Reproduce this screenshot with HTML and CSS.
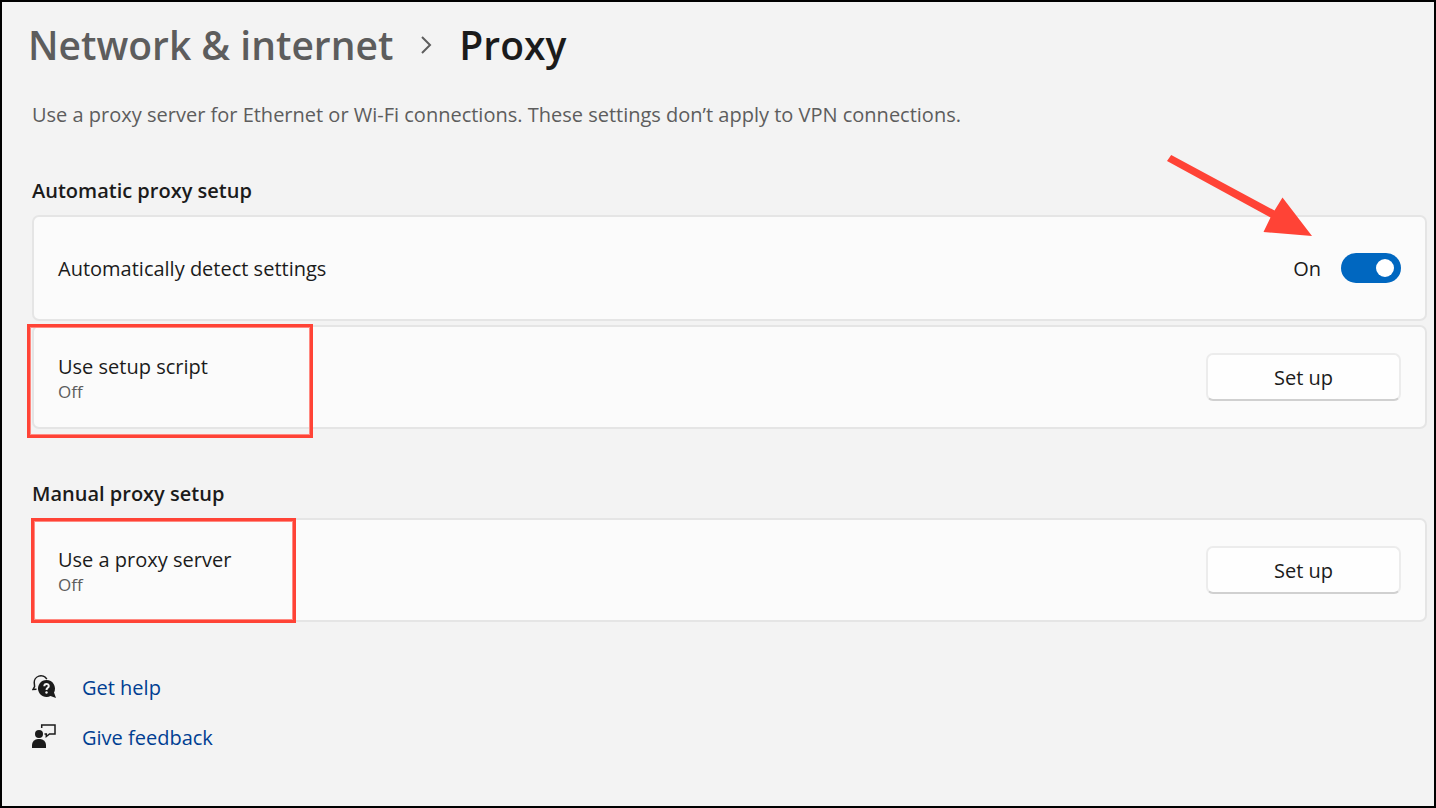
FILE: index.html
```html
<!DOCTYPE html>
<html lang="en">
<head>
    <meta charset="utf-8">
    <title>Settings - Proxy</title>
    <link rel="stylesheet" href="styles.css">
</head>
<body>
    <main class="page">
        <nav class="breadcrumb">
            <a href="#network">Network &amp; internet</a>
            <svg class="chevron" viewBox="0 0 12 18" width="12" height="18"><path d="M2 1l8 8-8 8"/></svg>
            <h1>Proxy</h1>
        </nav>
        <p class="intro">Use a proxy server for Ethernet or Wi-Fi connections. These settings don’t apply to VPN connections.</p>

        <section class="group">
            <h2>Automatic proxy setup</h2>
            <div class="card card-tall">
                <label for="auto-detect">Automatically detect settings</label>
                <div class="toggle">
                    <span>On</span>
                    <input type="checkbox" id="auto-detect" role="switch" checked>
                </div>
                <svg class="arrow" viewBox="0 0 144 84" width="144" height="84">
                    <path d="M4.200 0L107.500 55.500L115.500 42.500L145 81L96.500 77L103.500 62.500L0 6Z"/>
                </svg>
            </div>
            <div class="card">
                <div class="text">
                    <span id="script-name">Use setup script</span>
                    <small>Off</small>
                </div>
                <button type="button" aria-describedby="script-name">Set up</button>
                <div class="mark mark-script"></div>
            </div>
        </section>

        <section class="group">
            <h2>Manual proxy setup</h2>
            <div class="card">
                <div class="text">
                    <span id="server-name">Use a proxy server</span>
                    <small>Off</small>
                </div>
                <button type="button" aria-describedby="server-name">Set up</button>
                <div class="mark mark-server"></div>
            </div>
        </section>

        <footer class="links">
            <a href="#help">
                <svg viewBox="0 0 24 24" width="24" height="24">
                    <path class="line thin" d="M14.800 5.200A6.700 6.700 0 0 0 2.300 9.300L2.600 12.500L1 15.400L4.500 15.300"/>
                    <path d="M14.500 6a8.500 8.500 0 1 0 4 16l5.500 2-2-5.500A8.500 8.500 0 0 0 14.500 6Z"/>
                    <path class="question" d="M12.300 12.300c0-3.200 4.500-3 4.500-.3 0 2-2.300 1.700-2.300 4"/>
                    <circle class="dot" cx="14.500" cy="18.500" r="1.200"/>
                </svg>
                <span>Get help</span>
            </a>
            <a href="#feedback">
                <svg viewBox="0 0 24 24" width="24" height="24">
                    <path class="line thin" d="M9.700 4V1H23V10H17.500L14.300 12.500V10H12.500"/>
                    <circle cx="7" cy="10" r="4"/>
                    <path d="M0 24V21a6 6 0 0 1 6-6h2a6 6 0 0 1 6 6v3Z"/>
                </svg>
                <span>Give feedback</span>
            </a>
        </footer>
    </main>
</body>
</html>
```
FILE: styles.css
```css
* {
    box-sizing: border-box;
}
body {
    margin: 0;
    font-family: "Open Sans", "Noto Sans", sans-serif;
    font-size: 20px;
    line-height: 28px;
    color: #1b1b1b;
}
.page {
    min-height: 100vh;
    padding: 15px 7px 16px 30px;
    background: #f3f3f3;
    border: 2px solid #000;
}
.breadcrumb {
    display: flex;
    align-items: center;
    gap: 27px;
    margin-left: -4px;
    font-size: 39px;
    line-height: 56px;
    font-weight: 600;
}
.breadcrumb a {
    color: #5d5d5d;
    text-decoration: none;
}
.breadcrumb h1 {
    margin: 0;
    font-size: 39px;
    font-weight: 600;
}
.chevron {
    fill: none;
    stroke: #5d5d5d;
    stroke-width: 2;
}
.intro {
    margin: 28px 0 0;
    color: #5d5d5d;
}
.group {
    display: flex;
    flex-direction: column;
    gap: 4px;
    margin-top: 48px;
}
.group + .group {
    margin-top: 51px;
}
.group h2 {
    margin: 0 0 6px;
    font-size: 20px;
    line-height: 28px;
    font-weight: 600;
}
.card {
    position: relative;
    display: flex;
    align-items: center;
    justify-content: space-between;
    min-height: 104px;
    padding: 0 24px;
    background: #fbfbfb;
    border: 2px solid #e5e5e5;
    border-radius: 7px;
}
.card-tall {
    min-height: 106px;
}
.card label,
.text,
.toggle span {
    padding-top: 2px;
}
.text {
    display: flex;
    flex-direction: column;
}
.text small {
    font-size: 17px;
    line-height: 22px;
    color: #5d5d5d;
}
.toggle {
    display: flex;
    align-items: center;
    gap: 20px;
}
.toggle input {
    appearance: none;
    display: flex;
    align-items: center;
    justify-content: flex-end;
    width: 60px;
    height: 30px;
    margin: 0;
    padding: 0 7px;
    background: #0067c0;
    border-radius: 15px;
}
.toggle input::before {
    content: "";
    width: 18px;
    height: 18px;
    background: #fff;
    border-radius: 50%;
}
.toggle input:not(:checked) {
    justify-content: flex-start;
    background: #8a8a8a;
}
.card button {
    width: 195px;
    height: 48px;
    padding: 2px 0 0;
    font: inherit;
    color: inherit;
    background: #fefefe;
    border: 2px solid #ececec;
    border-bottom-color: #d0d0d0;
    border-radius: 7px;
}

/* red annotations over the cards */
.mark {
    position: absolute;
    border: 3px solid #ff4336;
    box-shadow: inset 0 0 0 1px #ff8a82;
}
.mark-script {
    top: -3px;
    left: -7px;
    width: 286px;
    height: 114px;
}
.mark-server {
    top: -2px;
    left: -3px;
    width: 265px;
    height: 105px;
}
.arrow {
    position: absolute;
    top: -62px;
    right: 114px;
    fill: #ff4336;
    overflow: visible;
}

.links {
    display: flex;
    flex-direction: column;
    align-items: flex-start;
    gap: 18px;
    margin-top: 48px;
}
.links a {
    display: flex;
    align-items: center;
    gap: 26px;
    color: #003e92;
    text-decoration: none;
}
.links span {
    padding-top: 4px;
}
.links svg {
    fill: #1b1b1b;
}
.links .line {
    fill: none;
    stroke: #1b1b1b;
}
.links .thin {
    stroke-width: 1.5;
}
.links .question {
    fill: none;
    stroke: #f3f3f3;
    stroke-width: 2;
}
.links .dot {
    fill: #f3f3f3;
}
```
